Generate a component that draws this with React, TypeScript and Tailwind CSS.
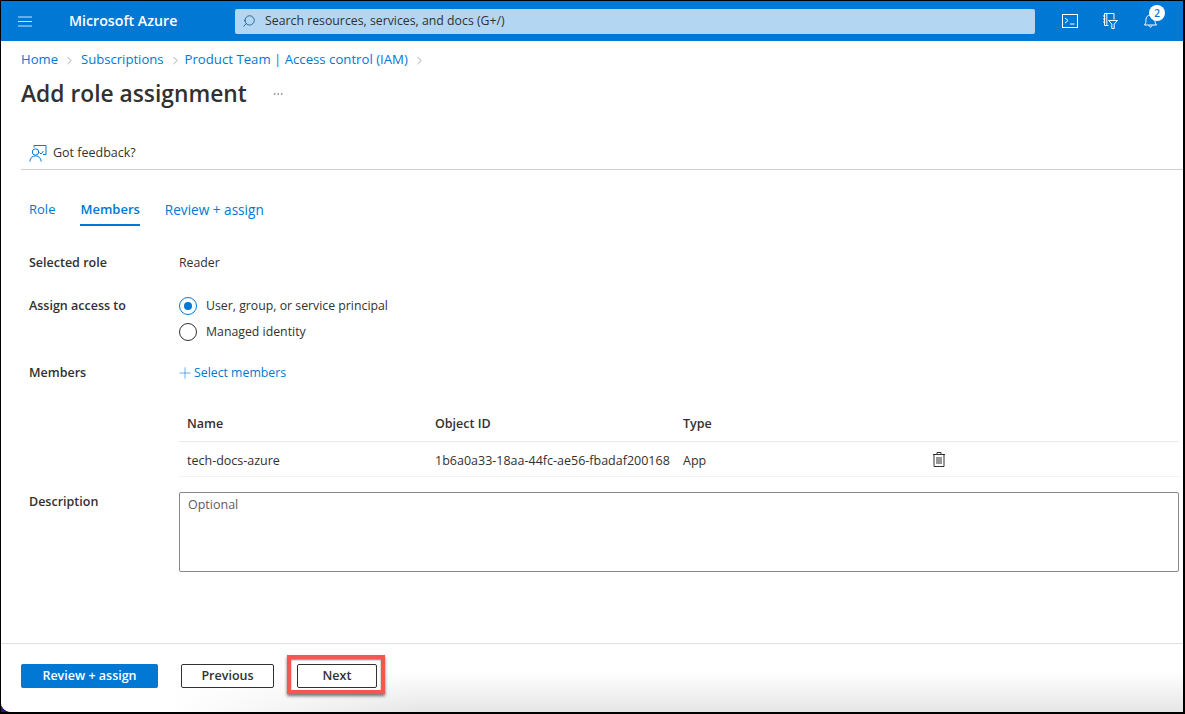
import { ChevronRight, Ellipsis, Plus, Search } from "lucide-react";

const font = { fontFamily: '"Open Sans", sans-serif' };

function Label({ children }: { children: string }) {
  return <div className="w-[150px] shrink-0 text-[12.5px] font-semibold text-[#323130]">{children}</div>;
}

function Radio({ checked, label }: { checked?: boolean; label: string }) {
  return (
    <div className="flex h-[26px] items-center gap-[9px] text-[12.3px] text-[#323130]">
      <span
        className={`flex size-[18px] items-center justify-center rounded-full border ${
          checked ? "border-[#0078d4]" : "border-[#323130]"
        }`}
      >
        {checked && <span className="size-2 rounded-full bg-[#0078d4]" />}
      </span>
      {label}
    </div>
  );
}

function MenuIcon() {
  return (
    <svg width="14" height="11" viewBox="0 0 14 11" fill="none" stroke="#cfe4f7" strokeWidth="1.2">
      <path d="M0 1h14M0 5.500h14M0 10h14" />
    </svg>
  );
}

function FeedbackIcon() {
  return (
    <svg width="18" height="17" viewBox="0 0 18 17" fill="none" stroke="#0078d4" strokeWidth="1">
      <path d="M5 2.500V.5h12v9h-3" />
      <circle cx="6.500" cy="7" r="3.200" />
      <path d="M.8 16.500c.3-3.600 2.600-5.600 5.700-5.600s5.400 2 5.700 5.600" />
      <path d="M10.500 7.500l1.500 1.500 2.500-3" />
    </svg>
  );
}

function CloudShellIcon() {
  return (
    <svg width="16" height="14" viewBox="0 0 16 14" fill="none" stroke="#fff" strokeWidth="1">
      <rect x=".5" y=".5" width="15" height="13" />
      <path d="M3 4l3 2.500L3 9M8 10h4.500" />
    </svg>
  );
}

function DirectoryIcon() {
  return (
    <svg width="16" height="16" viewBox="0 0 16 16" fill="none" stroke="#fff" strokeWidth="1">
      <path d="M6.500 12.500H2.500v-12h9.500v6M4.800.5v12M1 3h2.500M1 6h2.500M1 9h2.500" />
      <path d="M6.500 7.500h9l-3.300 3.600v4.400h-2.400v-4.400z" />
    </svg>
  );
}

function BellIcon() {
  return (
    <svg width="13" height="14" viewBox="0 0 13 14" fill="none" stroke="#fff" strokeWidth="1">
      <path d="M.5 11c1.300-1.500 1.500-3 1.500-5.500S3.800 1 6.500 1 11 3 11 5.500s.2 4 1.500 5.500z" />
      <path d="M5 11.500c0 2 3 2 3 0" />
    </svg>
  );
}

function TrashIcon() {
  return (
    <svg width="12" height="15" viewBox="0 0 12 15" fill="none" stroke="#323130" strokeWidth="1" className="-mt-1">
      <path d="M0 2.500h12M4 2.500V.5h4v2M1 2.500v12h10v-12M4 5v7M6 5v7M8 5v7" />
    </svg>
  );
}

export default function App() {
  return (
    <div style={font} className="h-[714px] w-[1185px] overflow-hidden bg-black pt-px pr-0.5 pb-0.5 pl-px">
      <div className="h-full bg-[#2d1580]">
        <div className="flex h-full flex-col overflow-hidden rounded-bl-[10px] bg-white">
          <header className="flex h-10 shrink-0 items-center bg-[#0078d4] text-white">
            <div className="ml-[17px]">
              <MenuIcon />
            </div>
            <span className="ml-[37px] w-[166px] text-[14.2px] font-semibold">Microsoft Azure</span>
            <div className="flex h-[25px] w-[800px] items-center rounded-[2px] bg-[#b3d6f2] pl-[7px] text-[12.3px] text-[#323130]">
              <Search size={14} strokeWidth={1.25} className="mr-[9px] -scale-x-100 text-[#004578]" />
              Search resources, services, and docs (G+/)
            </div>
            <div className="ml-[27px] flex items-center">
              <CloudShellIcon />
              <div className="ml-6">
                <DirectoryIcon />
              </div>
              <div className="relative ml-[26px]">
                <BellIcon />
                <span className="absolute -top-[9px] left-[5px] flex size-4 items-center justify-center rounded-full bg-white text-[10px] font-semibold text-[#0078d4]">
                  2
                </span>
              </div>
            </div>
          </header>

          <nav className="mt-[10px] flex h-[18px] items-center pl-5 text-[13.1px] text-[#0078d4]">
            <span>Home</span>
            <ChevronRight size={13} strokeWidth={1} className="mx-[5px] text-[#605e5c]" />
            <span>Subscriptions</span>
            <ChevronRight size={13} strokeWidth={1} className="ml-[5px] mr-[3px] text-[#605e5c]" />
            <span className="text-[13.2px]">Product Team | Access control (IAM)</span>
            <ChevronRight size={13} strokeWidth={1} className="mx-[5px] text-[#605e5c]" />
          </nav>

          <div className="mt-[9px] flex h-8 items-center pl-5">
            <h1 className="text-[22.8px] font-semibold text-[#323130]">Add role assignment</h1>
            <Ellipsis size={12} strokeWidth={1} className="ml-[25px] text-[#605e5c]" />
          </div>

          <div className="ml-5 mt-[29px] flex h-[31px] items-center gap-[6px] border-b border-[#d2d0ce] pb-0.5 pl-2 text-[12.5px] text-[#323130]">
            <FeedbackIcon />
            <span>Got feedback?</span>
          </div>

          <div className="mt-[30px] flex h-[26px] items-start gap-[25px] pl-7 text-[13px] text-[#0078d4]">
            <span className="h-[26px]">Role</span>
            <span className="h-[26px] border-b-2 border-[#0078d4] font-semibold">Members</span>
            <span className="h-[26px] text-[13.6px] leading-[19px]">Review + assign</span>
          </div>

          <div className="mt-7 flex h-[18px] items-center pl-7">
            <Label>Selected role</Label>
            <span className="text-[12.3px] text-[#323130]">Reader</span>
          </div>

          <div className="mt-[21px] flex pl-7">
            <div className="flex h-[26px] items-center">
              <Label>Assign access to</Label>
            </div>
            <div>
              <Radio checked label="User, group, or service principal" />
              <Radio label="Managed identity" />
            </div>
          </div>

          <div className="mt-[15px] flex h-[26px] items-center pl-7">
            <Label>Members</Label>
            <Plus size={18} strokeWidth={0.75} className="-ml-[3px] -mt-px text-[#0078d4]" />
            <span className="text-[12.3px] text-[#0078d4]">Select members</span>
          </div>

          <div className="ml-[178px] mr-1 mt-[23px] text-[12.5px] text-[#323130]">
            <div className="flex h-[33px] items-center border-b border-[#edebe9] pb-px pl-2 font-semibold">
              <span className="w-[248px]">Name</span>
              <span className="w-[248px]">Object ID</span>
              <span>Type</span>
            </div>
            <div className="flex h-[35px] items-center border-b border-[#f3f2f1] pl-2 pt-[5px]">
              <span className="w-[248px]">tech-docs-azure</span>
              <span className="w-[248px]">1b6a0a33-18aa-44fc-ae56-fbadaf200168</span>
              <span className="w-[250px]">App</span>
              <TrashIcon />
            </div>
          </div>

          <div className="mt-[15px] flex pl-7">
            <div className="pt-px">
              <Label>Description</Label>
            </div>
            <div className="mr-1 h-[80px] flex-1 rounded-[2px] border border-[#8a8886] px-2 py-[3px] text-[12.5px] text-[#605e5c]">
              Optional
            </div>
          </div>

          <footer className="mt-[71px] flex flex-1 items-center border-t border-[#e1dfdd] bg-[linear-gradient(to_right,#fff_170px,transparent_420px),linear-gradient(to_bottom,#fff_40%,#e6e6e6)] pb-1 pl-5">
            <button className="h-6 w-[137px] rounded-[2px] bg-[#0078d4] text-[12.5px] font-semibold text-white">
              Review + assign
            </button>
            <button className="ml-[23px] h-6 w-[93px] rounded-[2px] border border-[#323130] bg-white text-[12.5px] font-semibold text-[#323130]">
              Previous
            </button>
            <div className="ml-[13px] -mt-[3px] border-4 border-[#f4574f] bg-white pb-0.5 pl-1.5 pr-1 pt-[5px] shadow-[0_2px_3px_rgba(0,0,0,0.55),inset_0_1px_2px_rgba(0,0,0,0.5)]">
              <button className="block h-6 w-[80px] rounded-[2px] border border-[#323130] bg-white text-[12.5px] font-semibold text-[#323130]">
                Next
              </button>
            </div>
          </footer>
        </div>
      </div>
    </div>
  );
}
